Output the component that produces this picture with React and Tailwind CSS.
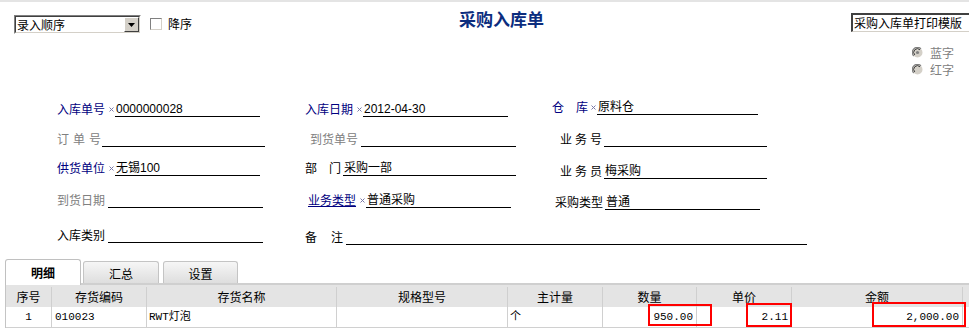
import React from 'react';

const CJK = "font-['Noto_Sans_CJK_SC',sans-serif]";
const VAL = "font-['Liberation_Sans','Noto_Sans_CJK_SC',sans-serif]";
const MONO = "font-['Liberation_Mono','Noto_Sans_CJK_SC',monospace]";

const BLUE = 'text-[#000080]';
const GRAY = 'text-[#808080]';
const BLACK = 'text-black';

function Star() {
  return (
    <svg width="5" height="5" viewBox="0 0 5 5" className="mr-[1px] mt-[1px]">
      <path d="M0.5 0.5L4.5 4.5M4.5 0.5L0.5 4.5" stroke="#7a7aa8" strokeWidth="1" />
    </svg>
  );
}

function Field({ label, labelCls, labelW, star, value, lineW, cls = '' }) {
  return (
    <div className={`flex items-end ${cls}`}>
      <div className={`flex items-center justify-between pb-[1px] ${labelW}`}>
        <span className={`text-[12px] leading-[14px] whitespace-pre ${labelCls}`}>{label}</span>
        {star && <Star />}
      </div>
      <div className={`h-[15px] border-b border-black text-[12px] leading-[14px] pl-[1px] whitespace-nowrap ${VAL} ${lineW}`}>
        {value}
      </div>
    </div>
  );
}

function Radio({ checked, label }) {
  return (
    <div className="flex items-center h-[17px]">
      <svg width="11" height="11" viewBox="0 0 11 11" className="mr-[7px]">
        <circle cx="5.5" cy="5.5" r="5" fill="#d4d0c8" />
        <path d="M9 1.8 A5 5 0 0 0 1.8 9" stroke="#808080" strokeWidth="1.2" fill="none" />
        <path d="M8 2.8 A3.6 3.6 0 0 0 2.8 8" stroke="#404040" strokeWidth="1" fill="none" />
        {checked && <circle cx="5.5" cy="5.5" r="1.6" fill="#808080" />}
      </svg>
      <span className={`text-[12px] leading-[14px] ${GRAY}`}>{label}</span>
    </div>
  );
}

const columns = [
  { w: 'w-[46px]', title: '序号' },
  { w: 'w-[95px]', title: '存货编码' },
  { w: 'w-[190px]', title: '存货名称' },
  { w: 'w-[171px]', title: '规格型号' },
  { w: 'w-[95px]', title: '主计量' },
  { w: 'w-[94px]', title: '数量' },
  { w: 'w-[95px]', title: '单价' },
  { w: 'w-[171px]', title: '金额' },
  { w: 'w-[20px]', title: '' },
];

const row = [
  { v: '1', align: 'text-center' },
  { v: '010023', align: 'text-left pl-[3px]' },
  { v: 'RWT灯泡', align: 'text-left pl-[2px]' },
  { v: '', align: '' },
  { v: '个', align: 'text-left pl-[2px]' },
  { v: '950.00', align: 'text-right pr-[3px]' },
  { v: '2.11', align: 'text-right pr-[3px]' },
  { v: '2,000.00', align: 'text-right pr-[3px]' },
  { v: '', align: '' },
];

export default function App() {
  return (
    <div className={`relative w-[969px] h-[330px] overflow-hidden bg-white ${CJK}`}>
      <div className="h-[2px] bg-[#e4e4e4]" />

      {/* top bar */}
      <div className="flex items-start h-[42px]">
        <div className="ml-[14px] mt-[13px] w-[127px] h-[19px] flex border-t border-l border-[#808080] border-b border-r border-b-white border-r-white">
          <div className="flex flex-1 border-t border-l border-[#404040] border-b border-r border-b-[#d4d0c8] border-r-[#d4d0c8] bg-white">
            <span className="flex-1 text-[12px] leading-[15px] pl-[1px]">录入顺序</span>
            <div className="w-[15px] h-[15px] bg-[#d4d0c8] border border-t-white border-l-white border-b-[#404040] border-r-[#404040] flex items-center justify-center">
              <svg width="7" height="4" viewBox="0 0 7 4"><path d="M0 0h7L3.5 4z" fill="#000" /></svg>
            </div>
          </div>
        </div>
        <div className="ml-[9px] mt-[16px] w-[12px] h-[12px] border border-t-[#808080] border-l-[#808080] border-b-[#d4d0c8] border-r-[#d4d0c8] bg-white" />
        <span className="ml-[6px] mt-[15px] text-[12px] leading-[14px]">降序</span>
        <h1 className="ml-[267px] mt-[6px] text-[17px] leading-[22px] font-bold text-[#0c2d7e]">采购入库单</h1>
        <div className="ml-auto mt-[11px] w-[118px] h-[19px] border-t-2 border-l-2 border-t-[#404040] border-l-[#404040] border-b border-[#d4d0c8] bg-white text-[12px] leading-[15px] pl-[1px] whitespace-nowrap">
          采购入库单打印模版
        </div>
      </div>

      {/* radios */}
      <div className="flex flex-col items-start pl-[912px] h-[34px]">
        <Radio checked label="蓝字" />
        <Radio label="红字" />
      </div>

      {/* form */}
      <div className="pl-[57px]">
        <div className="flex items-end h-[39px]">
          <Field cls="w-[248px]" label="入库单号" labelCls={BLUE} labelW="w-[58px]" star value="0000000028" lineW="w-[145px]" />
          <Field cls="w-[247px]" label="入库日期" labelCls={BLUE} labelW="w-[58px]" star value="2012-04-30" lineW="w-[145px]" />
          <Field label="仓　库" labelCls={BLUE} labelW="w-[45px]" star value="原料仓" lineW="w-[161px]" cls="mb-[2px]" />
        </div>
        <div className="flex items-end h-[30px]">
          <Field cls="w-[248px]" label="订单号" labelCls={`${GRAY} tracking-[4px]`} labelW="w-[45px]" value="" lineW="w-[163px]" />
          <Field cls="w-[247px] pl-[5px]" label="到货单号" labelCls={GRAY} labelW="w-[51px]" value="" lineW="w-[155px]" />
          <Field cls="pl-[8px]" label="业务号" labelCls={`${BLACK} tracking-[3px]`} labelW="w-[44px]" value="" lineW="w-[163px]" />
        </div>
        <div className="flex items-end h-[29px]">
          <Field cls="w-[248px]" label="供货单位" labelCls={BLUE} labelW="w-[58px]" star value="无锡100" lineW="w-[145px]" />
          <Field cls="w-[247px]" label="部　门" labelCls={BLACK} labelW="w-[38px]" value="采购一部" lineW="w-[173px]" />
          <Field cls="pl-[8px] mb-[-3px]" label="业务员" labelCls={`${BLACK} tracking-[3px]`} labelW="w-[44px]" value="梅采购" lineW="w-[163px]" />
        </div>
        <div className="flex items-end h-[32px]">
          <Field cls="w-[248px]" label="到货日期" labelCls={GRAY} labelW="w-[51px]" value="" lineW="w-[155px]" />
          <Field cls="w-[247px] pl-[3px]" label="业务类型" labelCls={`${BLUE} underline`} labelW="w-[58px]" star value="普通采购" lineW="w-[145px]" />
          <Field cls="pl-[3px] mb-[-2px]" label="采购类型" labelCls={BLACK} labelW="w-[50px]" value="普通" lineW="w-[155px]" />
        </div>
        <div className="flex items-end h-[35px]">
          <Field cls="w-[248px]" label="入库类别" labelCls={BLACK} labelW="w-[51px]" value="" lineW="w-[155px]" />
          <Field cls="mb-[-2px]" label="备　注" labelCls={`${BLACK} tracking-[1px]`} labelW="w-[41px]" value="" lineW="w-[461px]" />
        </div>
      </div>

      {/* tabs */}
      <div className="mt-[16px] flex items-end pl-[5px] h-[26px]">
        <div className="w-[76px] h-[26px] border border-b-0 border-[#c0c0c0] rounded-t-[3px] bg-white text-center text-[12px] leading-[26px] font-bold">
          明细
        </div>
        <div className="flex-1 flex items-end border-b-2 border-[#cfcfcf] h-[22px]">
          <div className="ml-[2px] w-[76px] h-[22px] border border-b-0 border-[#c4c4c4] rounded-t-[3px] bg-gradient-to-b from-[#f6f6f6] to-[#dedede] text-center text-[12px] leading-[24px]">
            汇总
          </div>
          <div className="ml-[4px] w-[75px] h-[22px] border border-b-0 border-[#c4c4c4] rounded-t-[3px] bg-gradient-to-b from-[#f6f6f6] to-[#dedede] text-center text-[12px] leading-[24px]">
            设置
          </div>
        </div>
      </div>

      {/* table */}
      <div className="ml-[5px] border-l border-[#c4c4c4]">
        <div className="flex h-[22px] bg-[#e4e4e4] pt-[2px]">
          {columns.map((c, i) => (
            <div key={i} className={`${c.w} shrink-0 border-r border-[#cfcfcf] text-center text-[12px] leading-[20px]`}>
              {c.title}
            </div>
          ))}
        </div>
        <div className="flex h-[21px] border-b border-[#d0d0d0]">
          {row.map((c, i) => (
            <div key={i} className={`${columns[i].w} shrink-0 border-r border-[#d0d0d0] text-[11px] leading-[20px] whitespace-nowrap ${MONO} ${c.align}`}>
              {c.v}
            </div>
          ))}
        </div>
      </div>

      {/* annotation boxes */}
      <div className="absolute left-[648px] top-[304px] w-[64px] h-[22px] border-2 border-[#ff0000]" />
      <div className="absolute left-[746px] top-[303px] w-[46px] h-[24px] border-2 border-[#ff0000]" />
      <div className="absolute left-[872px] top-[302px] w-[94px] h-[25px] border-2 border-[#ff0000]" />
    </div>
  );
}
